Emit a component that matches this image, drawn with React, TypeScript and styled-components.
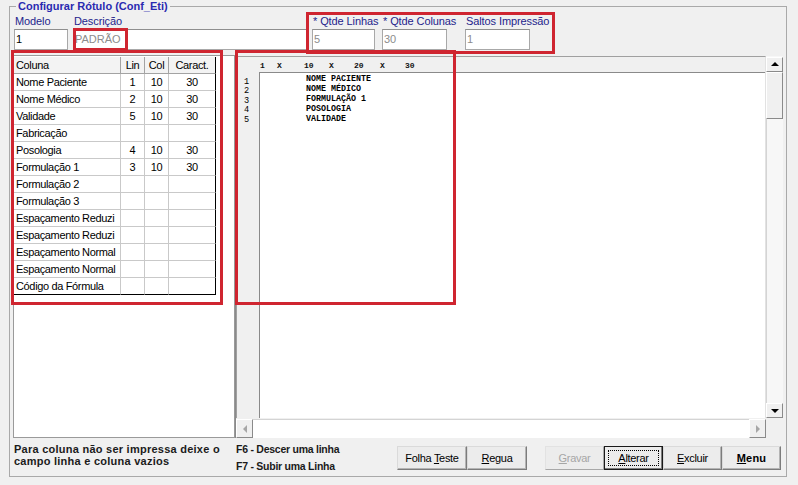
import React from 'react';
import styled, { createGlobalStyle, css } from 'styled-components';

const RED = '#cf2530';
const LABEL = '#24248c';
const FONT = '"Liberation Sans", Arial, sans-serif';
const MONO = '"Liberation Mono", "Courier New", monospace';

const GlobalStyle = createGlobalStyle`
  html, body { margin: 0; padding: 0; background: #f0f0f0; }
  body { font-family: ${FONT}; font-size: 11px; color: #000; }
`;

const Window = styled.div`
  width: 798px;
  height: 485px;
  background: #f0f0f0;
  overflow: hidden;
`;

const Group = styled.fieldset`
  margin: 0 11px 0 9px;
  padding: 0 2px 0 3px;
  min-width: 0;
  border: 1px solid #a9a9a9;
`;

const Caption = styled.legend`
  margin-left: 3px;
  padding: 0 2px;
  font: bold 11px/13px ${FONT};
  color: #2a2ab0;
`;

const Highlight = styled.div<{ $top: number; $left: number; $w: number; $h: number }>`
  position: absolute;
  top: ${p => p.$top}px;
  left: ${p => p.$left}px;
  width: ${p => p.$w}px;
  height: ${p => p.$h}px;
  box-sizing: border-box;
  border: 3px solid ${RED};
  pointer-events: none;
  z-index: 2;
`;

/* top fields */
const TopRow = styled.div`
  display: flex;
  height: 42px;
  box-sizing: border-box;
  padding-top: 1px;
`;

const QtdeGroup = styled.div`
  position: relative;
  display: flex;
`;

const Field = styled.div<{ $w: number; $indent?: number }>`
  flex: none;
  width: ${p => p.$w}px;
  margin-left: ${p => p.$indent || 0}px;
  display: flex;
  flex-direction: column;
`;

const FieldLabel = styled.span`
  height: 15px;
  line-height: 15px;
  padding-left: 1px;
  white-space: nowrap;
  color: ${LABEL};
  font-size: 11px;
  letter-spacing: -0.1px;
`;

const TextBox = styled.div<{ $w: number; $muted?: boolean }>`
  position: relative;
  width: ${p => p.$w}px;
  height: 21px;
  box-sizing: border-box;
  border: 1px solid #a8a8a8;
  border-top-color: #8e8e8e;
  background: #fff;
  padding-left: 1px;
  line-height: 19px;
  font-size: 11px;
  color: ${p => (p.$muted ? '#8c8c8c' : '#000')};
`;

/* middle area */
const Middle = styled.div`
  display: flex;
  height: 383px;
  margin-right: 1px;
`;

const LeftPanel = styled.div`
  position: relative;
  flex: none;
  width: 222px;
  box-sizing: border-box;
  border: 1px solid #9a9a9a;
  padding-top: 1px;
  background: #fff;
`;

const DataGrid = styled.div`
  display: grid;
  grid-template-columns: 107px 24px 24px 47px;
`;

const Cell = styled.div<{ $head?: boolean; $center?: boolean; $lastCol?: boolean; $lastRow?: boolean }>`
  height: 17px;
  box-sizing: border-box;
  padding: 0 2px;
  line-height: 16px;
  font-size: 11px;
  letter-spacing: -0.35px;
  white-space: nowrap;
  overflow: hidden;
  text-align: ${p => (p.$center ? 'center' : 'left')};
  background: ${p => (p.$head ? '#f3f3f3' : '#fff')};
  border-right: 1px solid ${p => (p.$lastCol ? '#000' : p.$head ? '#a3a3a3' : '#c9c9c9')};
  border-bottom: 1px solid ${p => (p.$lastRow ? '#000' : p.$head ? '#a3a3a3' : '#c9c9c9')};
`;

const RightPanel = styled.div`
  position: relative;
  flex: 1;
  display: grid;
  grid-template-columns: 1fr 17px;
  grid-template-rows: 1fr 20px;
  border-left: 1px solid #8a8a8a;
  padding-top: 1px;
`;

const Editor = styled.div`
  grid-row: 1;
  grid-column: 1;
  display: flex;
  flex-direction: column;
  min-height: 0;
  background: #f0f0f0;
  border-top: 1px solid #a0a0a0;
  border-left: 1px solid #a0a0a0;
  border-right: 1px solid #e2e2e2;
`;

const Ruler = styled.div`
  flex: none;
  display: flex;
  height: 15px;
  box-sizing: border-box;
  padding: 4px 0 0 23px;
  font: bold 8px/10px ${MONO};
  color: #111;
`;

const Mark = styled.span<{ $w?: number }>`
  flex: none;
  width: ${p => (p.$w ? `${p.$w}px` : 'auto')};
`;

const EditorBody = styled.div`
  flex: 1;
  display: flex;
  min-height: 0;
`;

const Gutter = styled.div`
  flex: none;
  width: 22px;
  box-sizing: border-box;
  padding: 6px 0 0 7px;
  font: 8.6px/9.4px ${MONO};
  color: #000;
  white-space: pre;
`;

const Memo = styled.div`
  flex: 1;
  background: #fff;
  border-top: 1px solid #8a8a8a;
  border-left: 1px solid #8a8a8a;
  padding: 1px 0 0 1px;
  font: bold 8.33px/10px ${MONO};
  color: #000;
  white-space: pre;
`;

const VScroll = styled.div`
  grid-row: 1;
  grid-column: 2;
  display: flex;
  flex-direction: column;
  padding-top: 1px;
  background: #f7f7f7;
`;

const HScroll = styled.div`
  grid-row: 2;
  grid-column: 1;
  display: flex;
  padding-top: 1px;
`;

const bevel = css`
  box-sizing: border-box;
  background: #f0f0f0;
  border: 1px solid;
  border-color: #fff #8a8a8a #8a8a8a #fff;
`;

const ScrollButton = styled.div<{ $w: number; $h: number }>`
  ${bevel};
  flex: none;
  width: ${p => p.$w}px;
  height: ${p => p.$h}px;
  display: flex;
  align-items: center;
  justify-content: center;
`;

const Thumb = styled.div`
  ${bevel};
  flex: none;
  height: 47px;
`;

const Track = styled.div<{ $horizontal?: boolean }>`
  flex: 1;
  background: ${p => (p.$horizontal ? '#fff' : '#f7f7f7')};
  border-top: ${p => (p.$horizontal ? '1px solid #d4d4d4' : 'none')};
  border-left: ${p => (p.$horizontal ? 'none' : '1px solid #d4d4d4')};
`;

const Arrow = styled.span<{ $dir: 'up' | 'down' | 'left' | 'right'; $muted?: boolean }>`
  width: 0;
  height: 0;
  border: 4px solid transparent;
  ${p => {
    const c = p.$muted ? '#a6a6a6' : '#000';
    switch (p.$dir) {
      case 'up':
        return css`border-bottom-color: ${c}; border-top-width: 0; margin-bottom: 1px;`;
      case 'down':
        return css`border-top-color: ${c}; border-bottom-width: 0; margin-top: 1px;`;
      case 'left':
        return css`border-right-color: ${c}; border-width: 4px 4px 4px 0;`;
      default:
        return css`border-left-color: ${c}; border-width: 4px 0 4px 4px;`;
    }
  }}
`;

/* bottom area */
const BottomRow = styled.div`
  display: flex;
  align-items: flex-start;
  height: 38px;
`;

const Hint = styled.div`
  flex: none;
  width: 223px;
  box-sizing: border-box;
  padding: 5px 0 0 1px;
  font: bold 11px/12px ${FONT};
  letter-spacing: 0.25px;
  color: #1b1b1b;
`;

const Keys = styled.div`
  flex: none;
  width: 161px;
  padding-top: 3px;
  font: bold 10.5px/17px ${FONT};
  letter-spacing: -0.25px;
  color: #1b1b1b;
`;

const ButtonBar = styled.div<{ $gap?: number }>`
  display: flex;
  margin-top: 8px;
  margin-left: ${p => p.$gap || 0}px;
`;

const Button = styled.button<{ $w: number; $bold?: boolean; $focused?: boolean }>`
  position: relative;
  width: ${p => p.$w}px;
  height: 24px;
  margin: 0;
  padding: 0;
  box-sizing: border-box;
  background: #ececec;
  border: 1px solid;
  border-color: #dadada #7c7c7c #7c7c7c #dadada;
  box-shadow: inset -1px -1px 0 #b4b4b4;
  font-family: ${FONT};
  font-size: 11px;
  letter-spacing: ${p => (p.$bold ? '0.2px' : '-0.3px')};
  font-weight: ${p => (p.$bold ? 'bold' : 'normal')};
  color: #000;

  &:disabled {
    color: #a6a6a6;
    border-color: #e2e2e2 #a8a8a8 #a8a8a8 #e2e2e2;
    box-shadow: none;
  }

  ${p =>
    p.$focused &&
    css`
      border: 1px solid #1a1a1a;
      box-shadow: inset -1px -1px 0 #7c7c7c;
      &::after {
        content: '';
        position: absolute;
        inset: 3px;
        border: 1px dotted #000;
      }
    `}
`;

const rows: [string, string, string, string][] = [
  ['Nome Paciente', '1', '10', '30'],
  ['Nome Médico', '2', '10', '30'],
  ['Validade', '5', '10', '30'],
  ['Fabricação', '', '', ''],
  ['Posologia', '4', '10', '30'],
  ['Formulação 1', '3', '10', '30'],
  ['Formulação 2', '', '', ''],
  ['Formulação 3', '', '', ''],
  ['Espaçamento Reduzi', '', '', ''],
  ['Espaçamento Reduzi', '', '', ''],
  ['Espaçamento Normal', '', '', ''],
  ['Espaçamento Normal', '', '', ''],
  ['Código da Fórmula', '', '', ''],
];

const rulerMarks: [string, number][] = [
  ['1', 17],
  ['X', 27],
  ['10', 25],
  ['X', 25],
  ['20', 26],
  ['X', 25],
  ['30', 0],
];

const memoLines = ['NOME PACIENTE', 'NOME MÉDICO', 'FORMULAÇÃO 1', 'POSOLOGIA', 'VALIDADE'];

const App: React.FC = () => {
  return (
    <Window>
      <GlobalStyle />
      <Group>
        <Caption>Configurar Rótulo (Conf_Eti)</Caption>

        <TopRow>
          <Field $w={59} $indent={1}>
            <FieldLabel>Modelo</FieldLabel>
            <TextBox $w={54}>1</TextBox>
          </Field>
          <Field $w={239}>
            <FieldLabel>Descrição</FieldLabel>
            <TextBox $w={234} $muted>
              PADRÃO
              <Highlight $top={-2} $left={-1} $w={55} $h={23} />
            </TextBox>
          </Field>
          <QtdeGroup>
            <Field $w={70}>
              <FieldLabel>* Qtde Linhas</FieldLabel>
              <TextBox $w={63} $muted>5</TextBox>
            </Field>
            <Field $w={83}>
              <FieldLabel>* Qtde Colunas</FieldLabel>
              <TextBox $w={65} $muted>30</TextBox>
            </Field>
            <Field $w={90}>
              <FieldLabel>Saltos Impressão</FieldLabel>
              <TextBox $w={65} $muted>1</TextBox>
            </Field>
            <Highlight $top={-2} $left={-6} $w={249} $h={42} />
          </QtdeGroup>
        </TopRow>

        <Middle>
          <LeftPanel>
            <DataGrid>
              <Cell $head>Coluna</Cell>
              <Cell $head $center>Lin</Cell>
              <Cell $head $center>Col</Cell>
              <Cell $head $center $lastCol>Caract.</Cell>
              {rows.map((r, i) => {
                const last = i === rows.length - 1;
                return (
                  <React.Fragment key={i}>
                    <Cell $lastRow={last}>{r[0]}</Cell>
                    <Cell $center $lastRow={last}>{r[1]}</Cell>
                    <Cell $center $lastRow={last}>{r[2]}</Cell>
                    <Cell $center $lastRow={last} $lastCol>{r[3]}</Cell>
                  </React.Fragment>
                );
              })}
            </DataGrid>
            <Highlight $top={-6} $left={-3} $w={212} $h={255} />
          </LeftPanel>

          <RightPanel>
            <Editor>
              <Ruler>
                {rulerMarks.map(([t, w], i) => (
                  <Mark key={i} $w={w}>{t}</Mark>
                ))}
              </Ruler>
              <EditorBody>
                <Gutter>{memoLines.map((_, i) => i + 1).join('\n')}</Gutter>
                <Memo>{memoLines.map(l => '         ' + l).join('\n')}</Memo>
              </EditorBody>
            </Editor>
            <VScroll>
              <ScrollButton $w={17} $h={15}><Arrow $dir="up" /></ScrollButton>
              <Thumb />
              <Track />
              <ScrollButton $w={17} $h={15}><Arrow $dir="down" /></ScrollButton>
            </VScroll>
            <HScroll>
              <ScrollButton $w={17} $h={19}><Arrow $dir="left" $muted /></ScrollButton>
              <Track $horizontal />
              <ScrollButton $w={17} $h={19}><Arrow $dir="right" $muted /></ScrollButton>
            </HScroll>
            <Highlight $top={-5} $left={-1} $w={221} $h={255} />
          </RightPanel>
        </Middle>

        <BottomRow>
          <Hint>
            Para coluna não ser impressa deixe o<br />
            campo linha e coluna vazios
          </Hint>
          <Keys>
            F6 - Descer uma linha<br />
            F7 - Subir uma Linha
          </Keys>
          <ButtonBar>
            <Button $w={70}>Folha <u>T</u>este</Button>
            <Button $w={60}><u>R</u>egua</Button>
          </ButtonBar>
          <ButtonBar $gap={18}>
            <Button $w={59} disabled><u>G</u>ravar</Button>
            <Button $w={59} $focused><u>A</u>lterar</Button>
            <Button $w={59}><u>E</u>xcluir</Button>
            <Button $w={59} $bold><u>M</u>enu</Button>
          </ButtonBar>
        </BottomRow>
      </Group>
    </Window>
  );
};

export default App;
